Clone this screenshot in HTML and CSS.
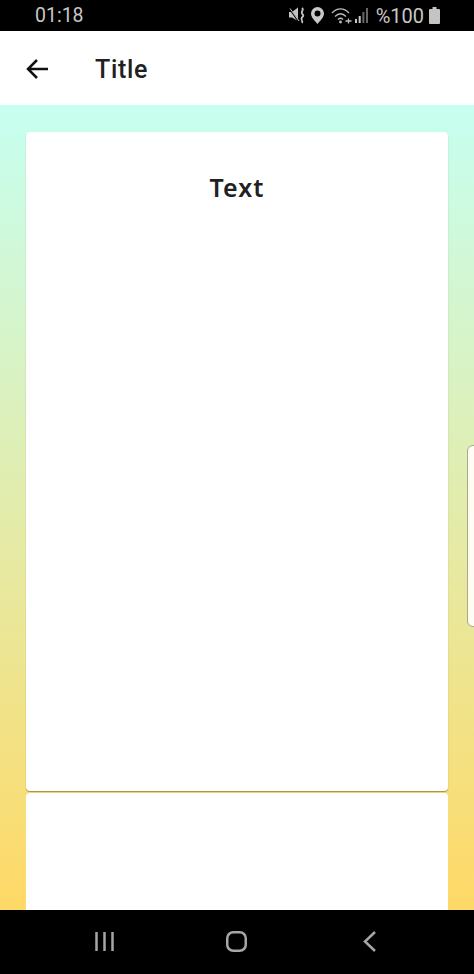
FILE: index.html
```html
<!DOCTYPE html>
<html lang="en">
<head>
  <meta charset="UTF-8" />
  <meta name="viewport" content="width=device-width, initial-scale=1.0"/>
  <title>Title</title>
  <link rel="stylesheet" href="styles.css">
</head>
<body>

  <div class="status-bar">
    <span class="clock">01:18</span>
    <div class="status-icons">
      <svg class="icon-mute" width="16" height="17" viewBox="0 0 16 17">
        <path d="M0 5h3l6-4.500V14L3 10.500H0z" fill="#c4c4c4"/>
        <path d="M0 1l10 14" stroke="#000" stroke-width="1.500"/>
        <path d="M1 1.500l9 12.500" stroke="#c4c4c4" stroke-width="1"/>
        <path d="M13 1c2.500 2-1.500 3.500 0 5.500s2 2 0 4 1.500 3.500 0 5.500" fill="none" stroke="#c4c4c4" stroke-width="1.800"/>
      </svg>
      <svg class="icon-pin" width="13" height="17" viewBox="0 0 13 17">
        <path fill-rule="evenodd" d="M6.500 0a6.500 6.500 0 0 1 6.500 6.500c0 4-4.500 8-6.500 10.500C4.500 14.500 0 10.500 0 6.500A6.500 6.500 0 0 1 6.500 0zm0 3.500a3 3 0 1 0 0 6 3 3 0 0 0 0-6z" fill="#c8c8c8"/>
      </svg>
      <svg class="icon-wifi" width="21" height="17" viewBox="0 0 21 17">
        <g fill="none" stroke="#bdbdbd" stroke-width="1.300">
          <path d="M1 6c5-5.500 12-5.500 17 0"/>
          <path d="M4 9.500c3.500-3.500 7.500-3.500 11 0"/>
          <path d="M7 12.500c1.500-1.500 3.500-1.500 5 0"/>
        </g>
        <circle cx="9.500" cy="15" r="1.400" fill="#bdbdbd"/>
        <path d="M14.500 14h6M17.500 11.500v5" stroke="#bdbdbd" stroke-width="1.300"/>
      </svg>
      <svg class="icon-signal" width="13" height="17" viewBox="0 0 13 17">
        <rect x="0" y="12" width="2" height="4" fill="#c8c8c8"/>
        <rect x="3.700" y="9" width="2" height="7" fill="#c8c8c8"/>
        <rect x="7.400" y="5" width="2" height="11" fill="#666"/>
        <rect x="11" y="1" width="2" height="15" fill="#666"/>
      </svg>
      <span class="battery-text">%100</span>
      <svg class="icon-battery" width="11" height="17" viewBox="0 0 11 17">
        <path d="M3.500 0h4v2H10a1 1 0 0 1 1 1v13a1 1 0 0 1-1 1H1a1 1 0 0 1-1-1V3a1 1 0 0 1 1-1h2.500z" fill="#c4c4c4"/>
      </svg>
    </div>
  </div>

  <header class="app-bar">
    <svg class="back-arrow" width="24" height="24" viewBox="0 0 24 24">
      <path d="M23 12H3M12 3l-9 9 9 9" fill="none" stroke="#111" stroke-width="2.500"/>
    </svg>
    <h1 class="app-title">Title</h1>
  </header>

  <main class="content">
    <section class="card card-main">
      <h2 class="card-text">Text</h2>
    </section>
    <section class="card card-next"></section>
    <div class="edge-handle"></div>
  </main>

  <nav class="nav-bar">
    <svg class="nav-recents" width="19" height="21" viewBox="0 0 19 21">
      <path d="M1.500 1v19M9.500 1v19M17.500 1v19" stroke="#a6a6a6" stroke-width="2.500"/>
    </svg>
    <svg class="nav-home" width="21" height="21" viewBox="0 0 21 21">
      <rect x="1.250" y="1.250" width="18.500" height="18.500" rx="6" fill="none" stroke="#a6a6a6" stroke-width="2.500"/>
    </svg>
    <svg class="nav-back" width="13" height="21" viewBox="0 0 13 21">
      <path d="M12 1L2 10.500 12 20" fill="none" stroke="#a6a6a6" stroke-width="2.500"/>
    </svg>
  </nav>

</body>
</html>
```

FILE: styles.css
```css
html, body {
  margin: 0;
  height: 100%;
}

body {
  display: flex;
  flex-direction: column;
  height: 974px;
  overflow: hidden;
  font-family: Roboto, sans-serif;
  background: #000;
}

.status-bar {
  display: flex;
  justify-content: space-between;
  align-items: center;
  height: 31px;
  padding: 0 34px 0 35px;
  background: #000;
  color: #c8c8c8;
  font-size: 19.5px;
}

.status-icons {
  display: flex;
  align-items: center;
}

.icon-pin {
  margin-left: 6px;
}

.icon-wifi {
  margin-left: 7px;
}

.icon-signal {
  margin-left: 3px;
}

.battery-text {
  margin-left: 8px;
  font-size: 20px;
}

.icon-battery {
  margin-left: 5px;
}

.app-bar {
  display: flex;
  align-items: center;
  height: 74px;
  padding: 2px 0 0 25px;
  box-sizing: border-box;
  background: #fff;
}

.app-title {
  margin: 0 0 0 46px;
  font-size: 25px;
  font-weight: 500;
  letter-spacing: 0.7px;
  color: #212121;
}

.content {
  position: relative;
  flex: 1;
  display: flex;
  flex-direction: column;
  gap: 2px;
  min-height: 0;
  padding: 27px 26px 0 26px;
  overflow: hidden;
  background: linear-gradient(#c6fff1, #ffd966);
}

.card {
  flex-shrink: 0;
  background: #fff;
  border-radius: 4px;
}

.card-main {
  height: 659px;
  box-shadow: 0 1px 1px rgba(90, 80, 20, 0.55);
}

.card-next {
  height: 140px;
}

.card-text {
  margin: 40px 0 0;
  text-align: center;
  font-family: "Noto Sans", sans-serif;
  font-size: 25px;
  font-weight: 600;
  letter-spacing: 1px;
  line-height: 30px;
  color: #212121;
}

.edge-handle {
  position: absolute;
  top: 340px;
  right: -7px;
  width: 12px;
  height: 180px;
  background: #fffdf2;
  border: 1px solid #a9a88a;
  border-radius: 6px;
}

.nav-bar {
  display: flex;
  align-items: center;
  box-sizing: border-box;
  height: 64px;
  padding: 0 0 2px 95px;
  background: #000;
}

.nav-home {
  margin-left: 112px;
}

.nav-back {
  margin-left: 116px;
}
```
